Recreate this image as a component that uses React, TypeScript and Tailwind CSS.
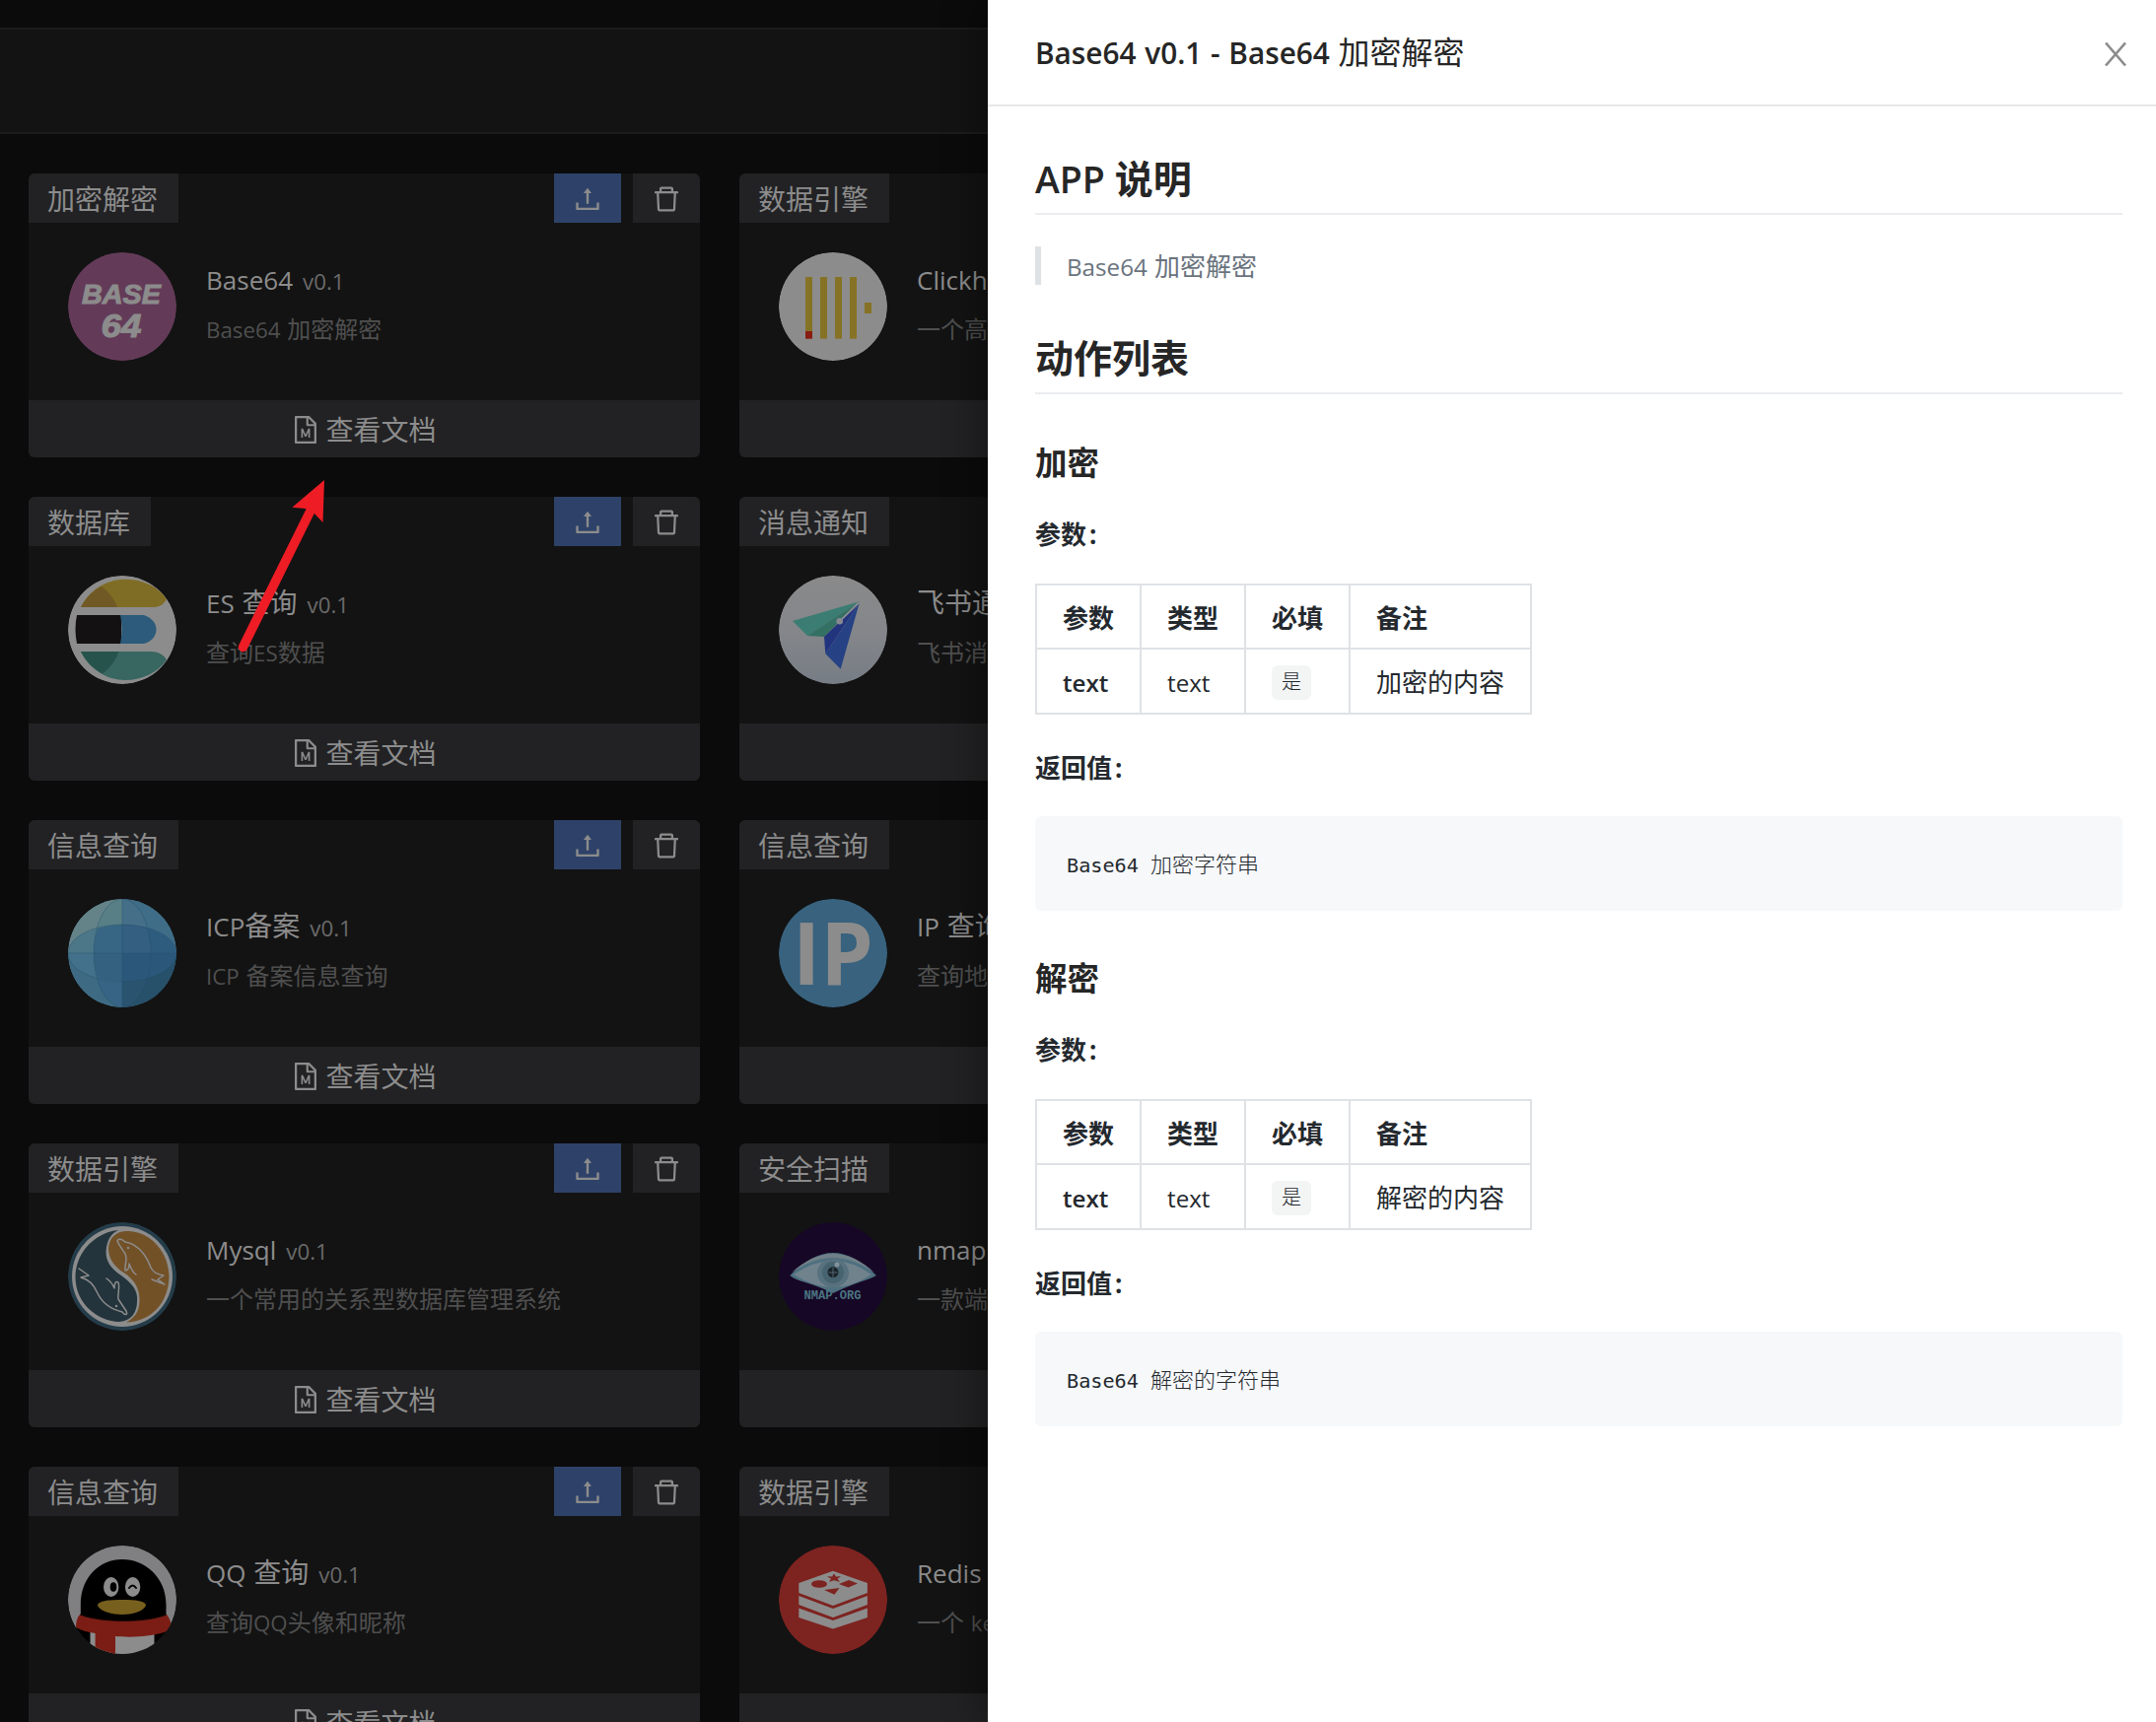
import React from "react";
import {
  AiOutlineUpload,
  AiOutlineDelete,
  AiOutlineFileMarkdown,
} from "react-icons/ai";

/* Splits mixed text so Latin runs are set slightly smaller than the Chinese glyphs. */
function T({ children }: { children: string }) {
  const runs = children.match(/[\x20-\x7e]+|[^\x20-\x7e]+/g) ?? [];
  return (
    <>
      {runs.map((run, i) =>
        /^[\x20-\x7e]/.test(run) ? (
          <span key={i} className="whitespace-pre text-[0.93em] [word-spacing:1px]">
            {run}
          </span>
        ) : (
          <span key={i}>{run}</span>
        ),
      )}
    </>
  );
}

function Logo({ bg, children }: { bg: string; children?: React.ReactNode }) {
  return (
    <svg viewBox="0 0 110 110" className="size-[110px] shrink-0 rounded-full">
      <circle cx="55" cy="55" r="55" fill={bg} />
      {children}
    </svg>
  );
}

const Base64Logo = () => (
  <Logo bg="#633b58">
    <g fill="#8c8c8c" stroke="#8c8c8c" strokeWidth="1" fontFamily="Liberation Sans" fontWeight="700" fontStyle="italic">
      <text x="14" y="51.5" fontSize="28" textLength="80" lengthAdjust="spacingAndGlyphs">BASE</text>
      <text x="33.5" y="85.5" fontSize="33" textLength="41" lengthAdjust="spacingAndGlyphs">64</text>
    </g>
  </Logo>
);

const ClickhouseLogo = () => (
  <Logo bg="#8c8c8c">
    <g fill="#857225">
      <rect x="27" y="25" width="7" height="55" />
      <rect x="42" y="25" width="7" height="62.7" />
      <rect x="57" y="25" width="7" height="62.7" />
      <rect x="72" y="25" width="7" height="62.7" />
      <rect x="87" y="51" width="7" height="11" />
    </g>
    <rect x="27" y="80" width="7" height="7.7" fill="#891c12" />
  </Logo>
);

const EsLogo = () => (
  <Logo bg="#8c8c8c">
    <path d="M13 32C22 14 39 3.7 58 3.7C76 3.7 91 11 100 23.7C97 29 93 32 86 32Z" fill="#806d25" />
    <path d="M13 32C18 22 25 15.500 34 11C42 17 47 24 50 32Z" fill="#705924" />
    <path d="M9 40H54V69H9C7 59 7 50 9 40Z" fill="#131112" />
    <path d="M53 40H77C85 43 89.500 48 89.500 54.500S85 67 77 69H53C55 59 55 50 53 40Z" fill="#2c5b7b" />
    <path d="M13 77C22 95 39 106 58 106C76 106 91 98 100 85.500C97 80 91 77 84 77Z" fill="#386660" />
    <path d="M13 77H51.500C48 87 42 94 35 99.500C25 94 18 87 13 77Z" fill="#26534c" />
  </Logo>
);

const FeishuLogo = () => (
  <Logo bg="url(#feishu-bg)">
    <defs>
      <linearGradient id="feishu-bg" x1="0" y1="0" x2="0" y2="1">
        <stop offset="0" stopColor="#8a8a8a" />
        <stop offset="0.5" stopColor="#84868a" />
        <stop offset="1" stopColor="#777d85" />
      </linearGradient>
    </defs>
    <path d="M14 46L81.700 26.300L29 61Z" fill="#3b7d73" />
    <path d="M29 61L46 62L81.700 26.300Z" fill="#347063" />
    <path d="M81.700 27.700L46 62L47.300 79.300Z" fill="#23347f" />
    <path d="M81.700 27.700L47.300 79.300L62.700 94.700Z" fill="#264284" />
    <path d="M61.700 46.300L81 27.500" stroke="#8a8c90" strokeWidth="1.800" />
    <circle cx="61.700" cy="46.300" r="3.300" fill="#868990" />
  </Logo>
);

const GlobeLogo = () => (
  <Logo bg="#3e6b84">
    <defs>
      <clipPath id="globe-clip"><circle cx="55" cy="55" r="55" /></clipPath>
    </defs>
    <g clipPath="url(#globe-clip)">
      <rect width="55" height="55" fill="#648389" />
      <rect x="55" width="55" height="55" fill="#3f6c86" />
      <rect y="55" width="55" height="55" fill="#3e6b83" />
      <rect x="55" y="55" width="55" height="55" fill="#27506a" />
      <path d="M55 0A29 55 0 0 0 26 55H55Z" fill="#587f85" />
      <path d="M55 0A29 55 0 0 1 84 55H55Z" fill="#456f89" />
      <path d="M26 55A29 55 0 0 0 55 110V55Z" fill="#376484" />
      <path d="M84 55A29 55 0 0 1 55 110V55Z" fill="#29536f" />
      <path d="M0 55A55 29 0 0 1 55 26V55Z" fill="#4b7788" />
      <path d="M55 26A55 29 0 0 1 110 55H55Z" fill="#2e5c7e" />
      <path d="M0 55A55 29 0 0 0 55 84V55Z" fill="#43708a" />
      <path d="M110 55A55 29 0 0 1 55 84V55Z" fill="#2b587a" />
      <path d="M30 30A55 29 0 0 1 55 26V55H26Q26 42 30 30Z" fill="#376584" />
      <path d="M80 30A55 29 0 0 0 55 26V55H84Q84 42 80 30Z" fill="#345f80" />
      <path d="M30 80A55 29 0 0 0 55 84V55H26Q26 68 30 80Z" fill="#33617f" />
      <g fill="none" stroke="#244d66" strokeWidth="0.500" strokeOpacity="0.7">
        <path d="M55 0V110M0 55H110" />
        <ellipse cx="55" cy="55" rx="29" ry="55" />
        <ellipse cx="55" cy="55" rx="55" ry="29" />
      </g>
    </g>
  </Logo>
);

const IpLogo = () => (
  <Logo bg="#38627e">
    <text x="14" y="86.500" fontSize="87" fontFamily="Open Sans" fontWeight="700" fill="#8c8c8c" textLength="82" lengthAdjust="spacingAndGlyphs">IP</text>
  </Logo>
);

const MysqlLogo = () => (
  <Logo bg="#243c49">
    <circle cx="55" cy="55" r="51" fill="#8c8c8c" />
    <path d="M51 8C30 10 8 28 7.500 55C7 82 30 101 52 101C66 100 71 90 70 75C69 66 62 60 54 54C42 46 37 38 39 25C41 15 45 11 51 8Z" fill="#23343c" />
    <path d="M62 9C84 10 102 30 102.500 55C102 82 84 101 59 101.500C68 97 73 90 72.500 77C72 65 66 58 58 52C46 45 41 36 41 26C42 14 51 8 62 9Z" fill="#735127" />
    <g fill="none" stroke="#8c8c8c" strokeWidth="1.500" strokeLinejoin="round" strokeLinecap="round">
      <path d="M50 19C51 16 55 17 58 20C70 22 78 30 84 46C86 50 90 53 97 54L91 58L98 63L85 58M50 19C52 24 55 27 58 32C61 38 57 43 58 49C61 49 62 46 62 42C64 48 66 51 69 53" />
      <path d="M11 47L21 54L13 56C22 58 27 65 30 72C36 85 47 89 55 91C58 95 61 94 59 90L51 78C50 73 53 66 51 61C48 59 47 63 47 67C45 62 42 59 39 57" />
      <circle cx="61" cy="26" r="0.500" />
      <circle cx="49" cy="85" r="0.500" />
    </g>
  </Logo>
);

const NmapLogo = () => (
  <Logo bg="#170726">
    <path d="M11.300 54Q34 31 55 31T98.900 54Q94 57 84 60Q67 66 55 72Q43 66 27 61Q16 58 11.300 54Z" fill="#4e7080" />
    <path d="M13 51Q34 32 55 32T97 51Q75 36 55 36T13 51Z" fill="#708087" />
    <path d="M15 53Q36 39 55 39T94 53Q74 66 55 66T15 53Z" fill="#70828c" />
    <ellipse cx="55" cy="51.500" rx="16" ry="14.500" fill="#58717f" />
    <ellipse cx="55" cy="51" rx="11" ry="11" fill="#476370" />
    <circle cx="55" cy="50.700" r="5.500" fill="#1a242b" />
    <path d="M55 46V56M50.500 51H59.500" stroke="#61747d" strokeWidth="0.800" />
    <circle cx="59" cy="43" r="2.500" fill="#839299" />
    <text x="25.500" y="77.800" fontSize="12" fontFamily="Liberation Mono" fontWeight="700" fill="#4b7582" textLength="58" lengthAdjust="spacingAndGlyphs">NMAP.ORG</text>
  </Logo>
);

const QqLogo = () => (
  <Logo bg="#808083">
    <path d="M12.800 75V60C12.800 32 32 14 55 14S99.500 32 99.500 60V75L105 90V110H5V90Z" fill="#000" />
    <path d="M22.500 80H87.500V110H22.500Z" fill="#8c8c8c" />
    <ellipse cx="43.700" cy="42" rx="7.700" ry="10" fill="#8c8c8c" />
    <ellipse cx="65.600" cy="42" rx="7.700" ry="10" fill="#8c8c8c" />
    <ellipse cx="46" cy="42" rx="3.300" ry="4.800" fill="#000" />
    <path d="M62 43Q65.500 38 69 43" fill="none" stroke="#000" strokeWidth="2" strokeLinecap="round" />
    <path d="M30 61C30 56 41 55 55 55S79 56 79 61C76 67 65 70 55 70S33 67 30 61Z" fill="#775f1d" />
    <path d="M12 70C32 78 78 79 100 70C104 74 105 81 105 85C87 94 58 93 48 92V110H27.600V89C20 88 13 86 8 83C8 78 9 73 12 70Z" fill="#7b1d14" />
    <path d="M12 70C32 78 78 79 100 70" fill="none" stroke="#180706" strokeWidth="1" />
  </Logo>
);

const RedisLogo = () => (
  <Logo bg="#7d2320">
    <g fill="#8c8c8c">
      <path d="M55 25.700L89.900 38V48L55 61L20.300 48V38Z" />
      <path d="M20.300 51L55 64L89.900 51V60L55 73L20.300 60Z" />
      <path d="M20.300 63.500L55 76L89.900 63.500V73L55 84.500L20.300 73Z" />
    </g>
    <g fill="#7d2320">
      <ellipse cx="41" cy="39" rx="8" ry="3.800" />
      <path d="M56 28.500L58 31.500L63 31.300L59.500 33.800L62 37L56 35.300L51 37L53 33.800L49 31.300L54 31.500Z" />
      <path d="M61 39L71 35L80 38.500L70.500 42.500Z" />
      <path d="M46 45L61.500 43L56.400 49.700Z" />
    </g>
  </Logo>
);

type App = { tag: string; name: string; desc: string; logo: React.ReactNode };

const apps: App[] = [
  { tag: "加密解密", name: "Base64", desc: "Base64 加密解密", logo: <Base64Logo /> },
  { tag: "数据引擎", name: "Clickhouse", desc: "一个高性能的列式数据库", logo: <ClickhouseLogo /> },
  { tag: "数据库", name: "ES 查询", desc: "查询ES数据", logo: <EsLogo /> },
  { tag: "消息通知", name: "飞书通知", desc: "飞书消息通知", logo: <FeishuLogo /> },
  { tag: "信息查询", name: "ICP备案", desc: "ICP 备案信息查询", logo: <GlobeLogo /> },
  { tag: "信息查询", name: "IP 查询", desc: "查询地理位置", logo: <IpLogo /> },
  { tag: "数据引擎", name: "Mysql", desc: "一个常用的关系型数据库管理系统", logo: <MysqlLogo /> },
  { tag: "安全扫描", name: "nmap", desc: "一款端口扫描工具", logo: <NmapLogo /> },
  { tag: "信息查询", name: "QQ 查询", desc: "查询QQ头像和昵称", logo: <QqLogo /> },
  { tag: "数据引擎", name: "Redis", desc: "一个 key-value 数据库", logo: <RedisLogo /> },
];

function AppCard({ app }: { app: App }) {
  return (
    <article className="flex h-[288px] flex-col overflow-hidden rounded-md bg-[#131313] text-[#8c8c8c]">
      <div className="flex h-[50px] justify-between">
        <span className="bg-[#222224] pl-[19px] pr-[21px] text-[28px] leading-[53px]">{app.tag}</span>
        <div className="flex gap-3">
          <button className="flex w-[68px] items-center justify-center bg-[#2e4269] pt-px">
            <AiOutlineUpload className="size-8" />
          </button>
          <button className="flex w-[68px] items-center justify-center bg-[#222224] pt-px">
            <AiOutlineDelete className="size-8" />
          </button>
        </div>
      </div>
      <div className="flex grow gap-[30px] px-10 pt-[30px]">
        {app.logo}
        <div className="whitespace-nowrap pt-[5px]">
          <div className="text-[28px] leading-[44px]">
            <T>{app.name}</T>
            <span className="ml-[10px] text-[24px] text-[#6a6a6a]">
              <T>v0.1</T>
            </span>
          </div>
          <div className="mt-2 text-[24px] leading-9 text-[#4f4f4f]">
            <T>{app.desc}</T>
          </div>
        </div>
      </div>
      <button className="flex h-[58px] items-center justify-center gap-1 bg-[#222224] pr-[2px] pt-px text-[28px]">
        <AiOutlineFileMarkdown className="size-8" />
        <span className="leading-[58px]">查看文档</span>
      </button>
    </article>
  );
}

function Pointer() {
  return (
    <svg viewBox="0 0 100 180" className="absolute left-[240px] top-[482px] h-[180px] w-[100px]">
      <path d="M6.500 174.500L75 36" stroke="#ee1c25" strokeWidth="9.500" strokeLinecap="round" />
      <path d="M89 5L56.400 32.700L70 34L79 39L87.500 48Z" fill="#ee1c25" />
    </svg>
  );
}

function Label({ children }: { children: string }) {
  return (
    <p className="text-[26px] font-bold leading-[40px] text-[#24292e]">
      {children}
      <span className="ml-[3px]">:</span>
    </p>
  );
}

function DocSection({ title, remark, result }: { title: string; remark: string; result: string }) {
  return (
    <section className="h-[523px]">
      <h3 className="text-[32.5px] font-bold leading-[41px]">{title}</h3>
      <div className="mt-[32px]">
        <Label>参数</Label>
      </div>
      <table className="mt-[30px] table-fixed border-collapse text-left text-[26px] leading-[39px] text-[#24292e] [&_td]:border-2 [&_td]:border-[#dfe2e5] [&_td]:px-[26px] [&_td]:pb-0 [&_td]:pt-[3px] [&_th]:border-2 [&_th]:border-[#dfe2e5] [&_th]:px-[26px] [&_th]:pb-0 [&_th]:pt-[3px]">
        <colgroup>
          <col className="w-[106px]" />
          <col className="w-[106px]" />
          <col className="w-[106px]" />
          <col className="w-[184px]" />
        </colgroup>
        <thead>
          <tr className="h-[65px]">
            <th className="whitespace-nowrap">参数</th>
            <th className="whitespace-nowrap">类型</th>
            <th className="whitespace-nowrap">必填</th>
            <th className="whitespace-nowrap">备注</th>
          </tr>
        </thead>
        <tbody>
          <tr className="h-[66px]">
            <td className="font-semibold"><T>text</T></td>
            <td><T>text</T></td>
            <td>
              <code className="block h-[35px] w-10 rounded-md bg-[#f3f5f5] text-center font-['Noto_Sans_CJK_SC',sans-serif] text-[20px] font-light leading-[31px]">
                是
              </code>
            </td>
            <td className="whitespace-nowrap">{remark}</td>
          </tr>
        </tbody>
      </table>
      <div className="mt-[34px]">
        <Label>返回值</Label>
      </div>
      <pre className="mt-[29px] h-24 overflow-hidden rounded-md bg-[#f6f8fa] px-8 font-['DejaVu_Sans_Mono','Noto_Sans_CJK_SC',monospace] text-[22px] leading-[100px] text-[#24292e]">
        <span className="text-[20.2px]">Base64 </span>
        <span className="font-light">{result}</span>
      </pre>
    </section>
  );
}

function DocDrawer() {
  return (
    <aside className="absolute inset-y-0 right-0 w-[1185px] bg-white text-[#262626] shadow-[-12px_0_32px_rgba(0,0,0,0.3)]">
      <header className="flex h-[108px] items-center justify-between border-b-2 border-[#e8e8e8] pl-12 pr-[30px]">
        <h1 className="text-[32px] leading-[48px]">
          <span className="font-semibold"><T>Base64 v0.1 - Base64 </T></span>
          <span>加密解密</span>
        </h1>
        <svg viewBox="0 0 22 24" className="mt-[3px] h-6 w-[22px] text-[#8c8c8c]">
          <path d="M1 0.500L21 23.500M21 0.500L1 23.500" stroke="currentColor" strokeWidth="2.600" />
        </svg>
      </header>
      <div className="pl-12 pr-[34px] pt-[48px]">
        <h2 className="h-[62px] border-b-2 border-[#eaecef] text-[39px] font-bold leading-[50px]">
          <span className="whitespace-pre text-[37.5px] font-semibold">APP </span>说明
        </h2>
        <blockquote className="mt-8 border-l-[6px] border-[#dfe2e5] pl-[26px] text-[26px] leading-[39px] text-[#6a737d]">
          <span className="block h-[39px] pt-px">
            <T>Base64 加密解密</T>
          </span>
        </blockquote>
        <h2 className="mt-[49px] h-[62px] border-b-2 border-[#eaecef] text-[39px] font-bold leading-[49px]">动作列表</h2>
        <div className="mt-[49px]">
          <DocSection title="加密" remark="加密的内容" result="加密字符串" />
          <DocSection title="解密" remark="解密的内容" result="解密的字符串" />
        </div>
      </div>
    </aside>
  );
}

export default function App() {
  return (
    <div className="relative h-[1747px] w-[2187px] overflow-hidden bg-[#0b0b0b] font-['Open_Sans','Noto_Sans_CJK_SC',sans-serif]">
      <div className="mt-7 h-[108px] border-y-2 border-[#1c1c1c] bg-[#131313]" />
      <main className="ml-[29px] mt-10 grid w-[1402px] grid-cols-2 gap-10">
        {apps.map((app) => (
          <AppCard key={app.desc} app={app} />
        ))}
      </main>
      <Pointer />
      <DocDrawer />
    </div>
  );
}
